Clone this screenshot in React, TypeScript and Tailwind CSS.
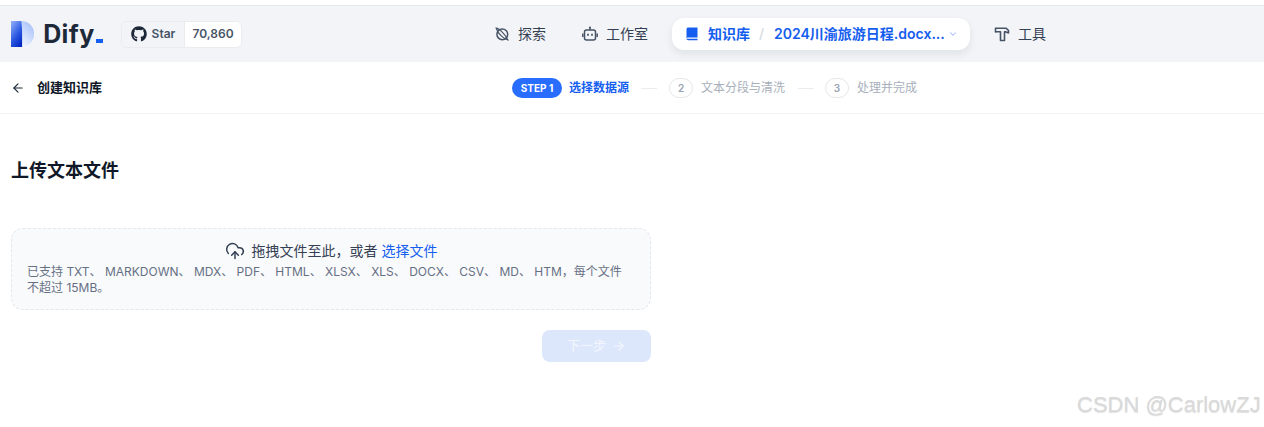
import React from "react";
import { ArrowLeft, ArrowRight, ChevronDown, CloudUpload } from "lucide-react";
import { FaGithub } from "react-icons/fa";

const FONT = "font-['Inter','Noto_Sans_CJK_SC',sans-serif]";

function Logo() {
  return (
    <div className="flex items-center">
      <svg width="25" height="28" viewBox="0 0 25 28" className="mr-[9px]">
        <defs>
          <linearGradient id="dr" x1="0" y1="1" x2="1" y2="0">
            <stop offset="0.15" stopColor="#ffffff" />
            <stop offset="1" stopColor="#9cb9fa" />
          </linearGradient>
          <linearGradient id="dl" x1="0.2" y1="0" x2="0.8" y2="1">
            <stop offset="0" stopColor="#86a6f7" />
            <stop offset="0.55" stopColor="#2a58e0" />
            <stop offset="1" stopColor="#0026c4" />
          </linearGradient>
        </defs>
        <path d="M0 0H11C19 0 25 6 25 14C25 22 19 28 11 28H0Z" fill="url(#dr)" />
        <path d="M0 0H11C12 6 12 10 12 14V28H0Z" fill="url(#dl)" />
      </svg>
      <span className="text-[25px] leading-none font-bold tracking-[0.4px] text-[#1d2939]">Dify</span>
      <span className="ml-[1px] mt-[13px] h-[4px] w-[8px] bg-[#155eef]" />
    </div>
  );
}

function Nav({ icon, label }: { icon: React.ReactNode; label: string }) {
  return (
    <div className="flex items-center gap-2 text-sm text-[#344054]">
      {icon}
      <span>{label}</span>
    </div>
  );
}

function Step({ n, label }: { n: number; label: string }) {
  return (
    <div className="flex items-center gap-[8px]">
      <div className="flex h-[20px] w-[24px] items-center justify-center rounded-full border border-[#e5e7eb] text-[10px] font-semibold text-[#98a2b3]">
        {n}
      </div>
      <span className="text-xs text-[#a8afbb]">{label}</span>
    </div>
  );
}

export default function App() {
  return (
    <div className={`relative h-[427px] w-[1264px] overflow-hidden bg-white ${FONT}`}>
      <div className="h-[6px] border-b border-[#e4e7ec] bg-white" />

      <header className="relative flex h-[56px] items-center bg-[#f2f4f7] pl-[11px]">
        <div className="w-[92px]">
          <Logo />
        </div>
        <div className="ml-[18px] flex h-[27px] items-center overflow-hidden rounded-md border border-[#eaecf0] text-xs font-semibold">
          <div className="flex h-full w-[62px] items-center justify-center gap-[5px] bg-[#f2f4f7] text-[#475467]">
            <FaGithub size={16} className="text-[#1d2939]" />
            <span>Star</span>
          </div>
          <div className="flex h-full w-[57px] items-center justify-center border-l border-[#eaecf0] bg-white text-[#475467]">
            70,860
          </div>
        </div>

        <div className="ml-[252px] flex items-center">
          <Nav
            label="探索"
            icon={
              <svg width="16" height="16" viewBox="0 0 16 16" fill="none" stroke="#475467" strokeWidth="1.5">
                <circle cx="8.3" cy="8.3" r="5.4" />
                <path d="M2.2 2.2C5 2.5 11 8 13.8 13.8C10 13 4 8 2.2 2.2Z" strokeWidth="1.2" />
              </svg>
            }
          />
          <div className="ml-[36px]">
            <Nav
              label="工作室"
              icon={
                <svg width="16" height="16" viewBox="0 0 16 16" fill="none" stroke="#475467" strokeWidth="1.5">
                  <rect x="2.5" y="4" width="11" height="10" rx="2" />
                  <path d="M8 4V1.8" />
                  <circle cx="8" cy="1.6" r="1" fill="#475467" stroke="none" />
                  <path d="M0.8 7.5V11M15.2 7.5V11" />
                  <path d="M6 7.8V9.8M10 7.8V9.8" strokeWidth="1.7" />
                </svg>
              }
            />
          </div>
          <div className="ml-[24px] flex h-[32px] w-[298px] items-center rounded-xl bg-white pl-[13px] text-sm font-semibold text-[#155eef] shadow-[0_4px_8px_rgba(16,24,40,0.08)]">
            <svg width="14" height="14" viewBox="0 0 14 14" className="mr-[9px]">
              <path d="M1.5 2.2C1.5 1 2.3 0.5 3.2 0.5H12.5V10.5H3.2C2.6 10.5 1.5 10.8 1.5 11.6Z" fill="#155eef" />
              <path d="M1.5 11.6C1.5 12.6 2.3 13.2 3.2 13.2H12.5V11.8H1.8Z" fill="#155eef" />
            </svg>
            <span>知识库</span>
            <span className="ml-[9px] mr-[10px] font-normal text-[#d0d5dd]">/</span>
            <span className="whitespace-nowrap">2024川渝旅游日程.docx...</span>
            <ChevronDown size={10} strokeWidth={2.5} className="ml-[3px] text-[#a4bcfd]" />
          </div>
          <div className="ml-[24px]">
            <Nav
              label="工具"
              icon={
                <svg width="16" height="16" viewBox="0 0 16 16" fill="none" stroke="#475467" strokeWidth="1.6" strokeLinejoin="round">
                  <path d="M1.5 2.2H12L14.5 4.5V7L11.5 5.8H10.5V14.5H6.5V5.8H3L1.5 6Z" />
                </svg>
              }
            />
          </div>
        </div>
      </header>

      <div className="relative flex h-[52px] items-center border-b border-[#f2f4f7] pl-[11px] pt-px">
        <ArrowLeft size={14} strokeWidth={2} className="text-[#1d2939]" />
        <span className="ml-[12px] text-[13px] font-semibold text-[#101828]">创建知识库</span>
        <div className="ml-[410px] flex items-center">
          <div className="flex h-[20px] w-[50px] items-center justify-center rounded-full bg-[#296dff] text-[10px] font-bold text-white">
            STEP 1
          </div>
          <span className="ml-[7px] text-xs font-semibold text-[#155eef]">选择数据源</span>
          <div className="ml-[12px] mr-[12px] h-px w-[16px] bg-[#eaecf0]" />
          <Step n={2} label="文本分段与清洗" />
          <div className="ml-[13px] mr-[11px] h-px w-[16px] bg-[#eaecf0]" />
          <Step n={3} label="处理并完成" />
        </div>
      </div>

      <main className="w-[640px] ml-[11px]">
        <h1 className="mt-[45px] text-lg leading-[24px] font-semibold text-[#101828]">上传文本文件</h1>
        <div className="mt-[45px] h-[82px] rounded-xl border border-dashed border-[#e4e7ec] bg-[#f9fafb] px-[15px] pt-[12px]">
          <div className="flex items-center justify-center text-sm leading-[20px] text-[#344054]">
            <CloudUpload size={20} strokeWidth={1.8} className="mr-[7px] text-[#344054]" />
            <span>拖拽文件至此，或者</span>
            <span className="ml-[4px] text-[#155eef]">选择文件</span>
          </div>
          <p className="mt-[3px] pr-[10px] text-xs leading-[16px] text-[#667085]">
            已支持 TXT、 MARKDOWN、 MDX、 PDF、 HTML、 XLSX、 XLS、 DOCX、 CSV、 MD、 HTM，每个文件不超过 15MB。
          </p>
        </div>
        <div className="mt-[20px] flex justify-end">
          <div className="flex h-[32px] w-[109px] items-center justify-center gap-[6px] rounded-lg bg-[#dde7fb] text-[13px] text-[#f3f6fd]">
            <span>下一步</span>
            <ArrowRight size={14} strokeWidth={2} />
          </div>
        </div>
      </main>

      <div className="absolute left-[1077px] top-[391px] font-['Liberation_Sans',sans-serif] text-[22px] leading-[28px] whitespace-nowrap text-[#d9d9d9] [text-shadow:0_1px_1px_rgba(0,0,0,0.12)]">
        CSDN @CarlowZJ
      </div>
    </div>
  );
}
